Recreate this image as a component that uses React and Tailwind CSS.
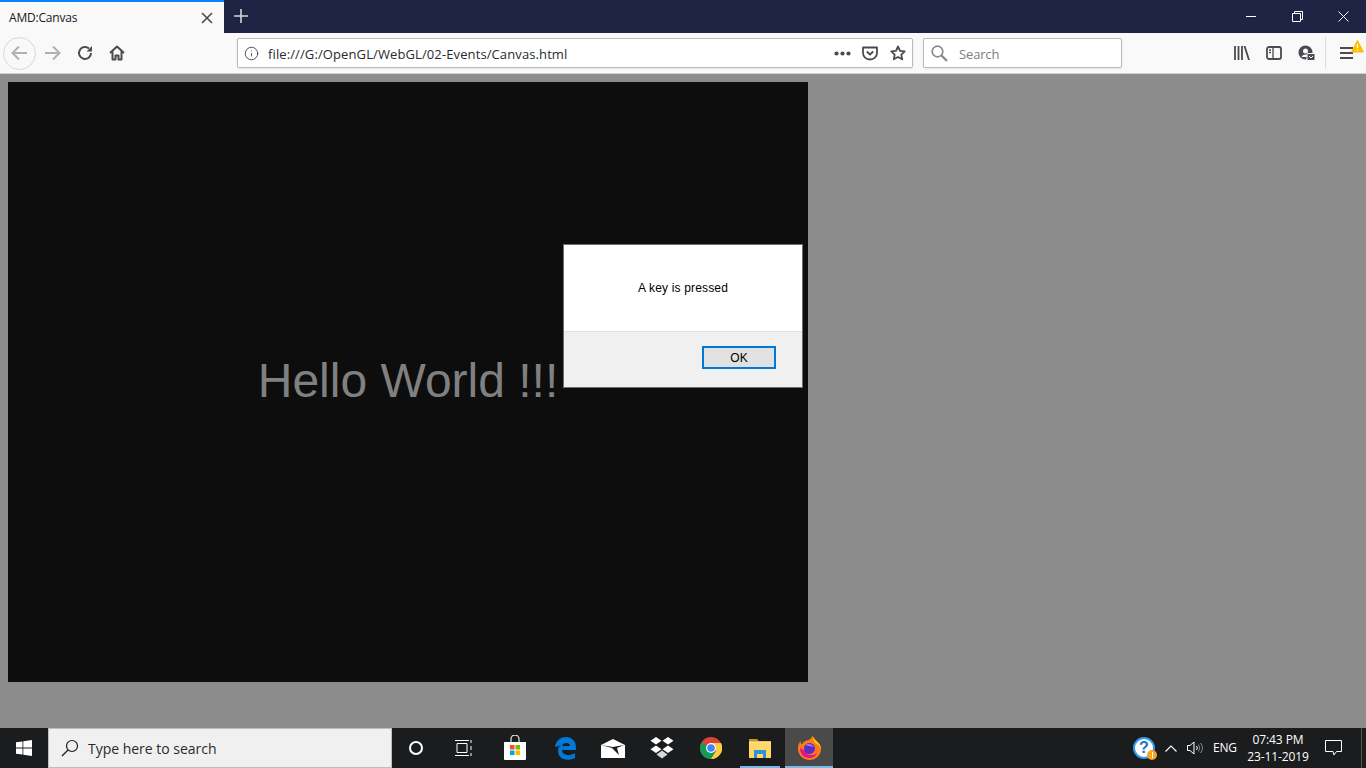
import React from 'react';
import { Info } from 'lucide-react';

const ui = "font-['Open_Sans',sans-serif]";

const TitleBar = () => (
  <div className="flex h-[33px] items-stretch bg-[#1f2445]">
    <div className="flex w-[224px] items-center justify-between border-t-2 border-[#0a84ff] bg-[#f9f9fa] pl-[9px] pr-[11px]">
      <span className={`${ui} text-[12px] leading-none tracking-[-0.2px] text-[#18181a]`}>AMD:Canvas</span>
      <svg width="12" height="12" viewBox="0 0 12 12" stroke="#4a4a4f" strokeWidth="1.6" fill="none">
        <path d="M1 1l10 10M11 1L1 11" />
      </svg>
    </div>
    <div className="flex w-[34px] items-center justify-center pb-[1px]">
      <svg width="14" height="14" viewBox="0 0 14 14" stroke="#d4d5dc" strokeWidth="1.6" fill="none">
        <path d="M7 0v14M0 7h14" />
      </svg>
    </div>
    <div className="flex-1" />
    <div className="flex">
      <div className="flex w-[46px] items-center justify-center">
        <div className="h-px w-[10px] bg-white" />
      </div>
      <div className="flex w-[46px] items-center justify-center">
        <svg width="11" height="11" viewBox="0 0 11 11" stroke="#fff" fill="none">
          <path d="M.5 2.500h8v8h-8zM2.500 2.500v-2h8v8h-2" />
        </svg>
      </div>
      <div className="flex w-[46px] items-center justify-center">
        <svg width="11" height="11" viewBox="0 0 11 11" stroke="#fff" fill="none">
          <path d="M.5.5l10 10M10.500.5l-10 10" />
        </svg>
      </div>
    </div>
  </div>
);

const ToolCell = ({ className = 'w-[32px]', children }) => (
  <div className={`flex items-center justify-center ${className}`}>{children}</div>
);

const Toolbar = () => (
  <div className="flex h-[41px] items-center border-b border-[#cfcfd1] bg-[#f9f9fa] pl-[3px]">
    <div className="flex h-[33px] w-[33px] items-center justify-center rounded-full border border-[#d7d7db]">
      <svg width="17" height="16" viewBox="0 0 17 16" stroke="#b1b1b3" strokeWidth="2" fill="none">
        <path d="M16 8H2M8 1.500L1.500 8 8 14.500" />
      </svg>
    </div>
    <ToolCell>
      <svg width="17" height="16" viewBox="0 0 17 16" stroke="#b1b1b3" strokeWidth="2" fill="none">
        <path d="M1 8h14M9 1.500L15.500 8 9 14.500" />
      </svg>
    </ToolCell>
    <ToolCell className="ml-[1px] w-[32px]">
      <svg width="16" height="16" viewBox="0 0 16 16" stroke="#4a4a4f" strokeWidth="2" fill="none">
        <path d="M14 8a6 6 0 1 1-2-4.500" />
        <path d="M15 1v5.500H9.500z" fill="#4a4a4f" stroke="none" />
      </svg>
    </ToolCell>
    <ToolCell>
      <svg width="16" height="16" viewBox="0 0 16 16" stroke="#4a4a4f" strokeWidth="2" fill="none" strokeLinejoin="round">
        <path d="M1 8l7-6.500L15 8M3.500 6.500V14.500h3V10.500h3v4h3V6.500" />
      </svg>
    </ToolCell>

    <div className="ml-[104px] flex h-[30px] w-[676px] items-center rounded-[2px] border border-[#b9b9bb] bg-white pl-[6px] pr-[6px] shadow-[0_1px_2px_rgba(0,0,0,0.08)]">
      <Info size={15} strokeWidth={1.6} className="text-[#55555a]" />
      <span className={`${ui} ml-[9px] flex-1 pt-[2px] text-[13px] leading-none tracking-[0.11px] text-[#2a2a2e]`}>file:///G:/OpenGL/WebGL/02-Events/Canvas.html</span>
      <div className="flex items-center gap-[2px]">
        <span className="h-[3px] w-[3px] rounded-full bg-[#4a4a4f] shadow-[0_0_0_0.6px_#4a4a4f]" />
        <span className="mx-[1px] h-[3px] w-[3px] rounded-full bg-[#4a4a4f] shadow-[0_0_0_0.6px_#4a4a4f]" />
        <span className="h-[3px] w-[3px] rounded-full bg-[#4a4a4f] shadow-[0_0_0_0.6px_#4a4a4f]" />
      </div>
      <svg className="ml-[12px]" width="16" height="15" viewBox="0 0 16 15" stroke="#4a4a4f" strokeWidth="1.800" fill="none" strokeLinejoin="round">
        <path d="M1 1.500h14V7a7 6.500 0 0 1-14 0zM4.800 5.500L8 8.500l3.200-3" />
      </svg>
      <svg className="ml-[12px]" width="16" height="16" viewBox="0 0 16 16" stroke="#4a4a4f" strokeWidth="1.800" fill="none" strokeLinejoin="round">
        <path d="M8 1.500l2 4.300 4.700.6-3.400 3.200.9 4.700L8 12l-4.200 2.300.9-4.700L1.300 6.400 6 5.800z" />
      </svg>
    </div>

    <div className="ml-[10px] flex h-[30px] w-[199px] items-center rounded-[2px] border border-[#b9b9bb] bg-white pl-[7px] shadow-[0_1px_2px_rgba(0,0,0,0.08)]">
      <svg width="17" height="17" viewBox="0 0 17 17" stroke="#8a8a8e" fill="none">
        <circle cx="6.500" cy="6.500" r="5.300" strokeWidth="1.700" />
        <path d="M10.500 10.500l5.500 5.500" strokeWidth="2.400" />
      </svg>
      <span className={`${ui} ml-[11px] pt-[2px] text-[13px] leading-none tracking-[-0.15px] text-[#7d7d85]`}>Search</span>
    </div>

    <div className="ml-[104px] flex items-center">
      <ToolCell>
        <svg width="16" height="14" viewBox="0 0 16 14" stroke="#4a4a4f" strokeWidth="1.800" fill="none">
          <path d="M1 0v14M4.500 0v14M8 0v14M10.500 0l4.500 14" />
        </svg>
      </ToolCell>
      <ToolCell>
        <svg width="16" height="14" viewBox="0 0 16 14" stroke="#4a4a4f" strokeWidth="1.800" fill="none">
          <rect x="1" y="1" width="14" height="12" rx="2" />
          <path d="M7 1v12M3 4h2M3 6.500h2" strokeWidth="1.300" />
        </svg>
      </ToolCell>
      <ToolCell>
        <svg width="17" height="16" viewBox="0 0 17 16">
          <circle cx="7.500" cy="7.500" r="7" fill="#4a4a4f" />
          <circle cx="7.500" cy="6" r="2.500" fill="#f9f9fa" />
          <path d="M3.500 12a4.500 4.500 0 0 1 8 0z" fill="#f9f9fa" />
          <rect x="9" y="8.500" width="8" height="7" rx="1" fill="#4a4a4f" stroke="#f9f9fa" />
          <path d="M11 11l2 2 2-2" stroke="#f9f9fa" fill="none" />
        </svg>
      </ToolCell>
    </div>
    <div className="ml-[3px] h-[32px] w-px bg-[#dcdcde]" />
    <div className="relative flex w-[40px] items-center justify-center">
      <svg width="13" height="12" viewBox="0 0 13 12" stroke="#4a4a4f" strokeWidth="1.800" fill="none">
        <path d="M0 1h13M0 6h13M0 11h13" />
      </svg>
      <svg className="absolute right-[2px] top-[-7px]" width="13" height="13" viewBox="0 0 13 13">
        <path d="M6.500.5l6 11.500H.5z" fill="#ffbf00" stroke="#ffbf00" strokeLinejoin="round" />
        <path d="M6.500 4v4M6.500 9.500v1.200" stroke="#fff" strokeWidth="1.300" />
      </svg>
    </div>
  </div>
);

const AlertBox = () => (
  <div className="absolute left-[563px] top-[244px] flex h-[144px] w-[240px] flex-col border border-[#6e6e6e] bg-white">
    <div className="flex flex-1 items-center justify-center">
      <span className="font-['Liberation_Sans',sans-serif] text-[12px] tracking-[0.16px] text-black">A key is pressed</span>
    </div>
    <div className="flex h-[56px] items-center justify-end border-t border-[#dfdfdf] bg-[#f0f0f0] pb-[4px] pr-[26px]">
      <div className="flex h-[23px] w-[74px] items-center justify-center border-2 border-[#0078d7] bg-[#e1e1e1] font-['Liberation_Sans',sans-serif] text-[12px] text-black">
        OK
      </div>
    </div>
  </div>
);

const Page = () => (
  <div className="flex-1 bg-[#8c8c8c] p-[8px]">
    <div className="flex h-[600px] w-[800px] items-center justify-center bg-[#0d0d0d] pb-[2px]">
      <span className="font-['Liberation_Sans',sans-serif] text-[48px] leading-none text-[#808080]">Hello World !!!</span>
    </div>
  </div>
);

const StoreIcon = () => (
  <svg width="24" height="26" viewBox="0 0 24 26" fill="none">
    <path d="M8 7V4a4 4 0 0 1 8 0v3" stroke="#d8d8d8" strokeWidth="1.300" />
    <path d="M1 7h22v17a1 1 0 0 1-1 1H2a1 1 0 0 1-1-1z" fill="#fff" />
    <rect x="7" y="10" width="4.500" height="4.500" fill="#f25022" />
    <rect x="12.500" y="10" width="4.500" height="4.500" fill="#7fba00" />
    <rect x="7" y="15.500" width="4.500" height="4.500" fill="#00a4ef" />
    <rect x="12.500" y="15.500" width="4.500" height="4.500" fill="#ffb900" />
  </svg>
);

const EdgeIcon = () => (
  <svg width="22" height="24" viewBox="0 0 22 24">
    <path d="M1 11C2 4 7 1 12 1c6 0 10 4 10 11v2H8c0 5 7 7 13 3v5c-8 4-17 1-17-7 0-3 1-5 3-6-3 1-5 2-6 2z" fill="#0078d7" />
    <path d="M8 10h8c0-4-7-4-8 0z" fill="#1b1c1e" />
  </svg>
);

const MailIcon = () => (
  <svg width="24" height="19" viewBox="0 0 24 19">
    <path d="M0 6L12 0l12 6v13H0z" fill="#fff" />
    <path d="M0 6l11 3 7 7-2-7 7-3-11 2z" fill="#1b1c1e" />
  </svg>
);

const DropboxIcon = () => (
  <svg width="24" height="22" viewBox="0 0 24 22" fill="#fff">
    <path d="M6 0l5.500 3.800L6 7.600.5 3.800zM18 0l5.500 3.800L18 7.600l-5.500-3.800zM6 8.400l5.500 3.800L6 16 .5 12.200zM18 8.400l5.500 3.800L18 16l-5.500-3.800z" />
    <path d="M12 13.500l5.500 4L12 21.500l-5.500-4z" fill="#d9d9d9" />
  </svg>
);

const ChromeIcon = () => (
  <svg width="22" height="22" viewBox="0 0 22 22">
    <circle cx="11" cy="11" r="11" fill="#db4437" />
    <path d="M11 11L1.500 5.500A11 11 0 0 0 11 22l5-6z" fill="#0f9d58" />
    <path d="M11 6h10a11 11 0 0 1-10 16l5-8z" fill="#ffcd40" />
    <circle cx="11" cy="11" r="5" fill="#fff" />
    <circle cx="11" cy="11" r="3.800" fill="#4285f4" />
  </svg>
);

const ExplorerIcon = () => (
  <svg width="22" height="20" viewBox="0 0 22 20">
    <path d="M0 1h8l2 2h12v3H0z" fill="#c9952f" />
    <path d="M0 5h22v15H0z" fill="#ffd766" />
    <path d="M5 20v-8h12v8h-3v-4H8v4z" fill="#2f8fd8" />
    <path d="M0 3.500h22v1.500H0z" fill="#fbe28f" />
  </svg>
);

const FirefoxIcon = () => (
  <svg width="23" height="24" viewBox="0 0 23 24">
    <path d="M11.500 24C5 24 0 19 0 12.500 0 9.500 1 7 2.500 5c0 2 .5 3 1.500 3.500C5 6 7 5 9 4.500 11 4 13 3 14.500 0c1 2 2 3 4 5 3 2.500 4.500 5 4.500 8 0 6-5 11-11.500 11z" fill="#ff7a18" />
    <path d="M14.500 0c1 2 2 3 4 5 3 2.500 4.500 5 4.500 8-1-3-3-5-6-6-1-2-2-4-2.500-7z" fill="#ffcb00" />
    <path d="M2 12c0 6 4 10 9 10 4 0 7-2 8-5-3 3-10 3-12-2z" fill="#e31587" />
    <circle cx="11.500" cy="12.500" r="5.500" fill="#5d2fc1" />
    <path d="M7 9c3-2 7-1 9 2-3-1-6-1-9-2z" fill="#a978ff" />
  </svg>
);

const TaskIcon = ({ children, className = 'w-[49px]' }) => (
  <div className={`flex h-full items-center justify-center ${className}`}>{children}</div>
);

const Taskbar = () => (
  <div className="flex h-[40px] items-stretch bg-[#1b1c1e]">
    <div className="flex w-[48px] items-center justify-center">
      <svg width="16" height="16" viewBox="0 0 16 16" fill="#fff">
        <path d="M0 2.300l6.500-.9v6.200H0zM7.300 1.300L16 0v7.600H7.300zM0 8.400h6.500v6.200L0 13.700zM7.300 8.400H16V16l-8.700-1.300z" />
      </svg>
    </div>
    <div className="flex w-[344px] items-center border border-[#bdbdbd] bg-[#f0f0f0] pl-[12px]">
      <svg width="18" height="18" viewBox="0 0 18 18" stroke="#1a1a1a" strokeWidth="1.200" fill="none">
        <circle cx="11" cy="7" r="5.500" />
        <path d="M7 11l-6 6" />
      </svg>
      <span className={`${ui} ml-[9px] pt-[2px] text-[14px] leading-none tracking-[-0.02px] text-[#2b2b2b]`}>Type here to search</span>
    </div>
    <TaskIcon className="w-[48px]">
      <div className="h-[14px] w-[14px] rounded-full border-2 border-white" />
    </TaskIcon>
    <TaskIcon className="w-[47px]">
      <svg width="17" height="16" viewBox="0 0 17 16" stroke="#fff" fill="none">
        <path d="M2 3.500h10v9H2zM0 .5h14M0 15.500h14M16 0v3M16 6v4M16 13v3" />
      </svg>
    </TaskIcon>
    <TaskIcon className="ml-[2px] w-[52px]"><StoreIcon /></TaskIcon>
    <TaskIcon className="w-[47px]"><EdgeIcon /></TaskIcon>
    <TaskIcon><MailIcon /></TaskIcon>
    <TaskIcon><DropboxIcon /></TaskIcon>
    <TaskIcon><ChromeIcon /></TaskIcon>
    <TaskIcon className="ml-[5px] mr-[5px] w-[40px] border-b-2 border-[#76b9ed] pt-[2px]"><ExplorerIcon /></TaskIcon>
    <TaskIcon className="w-[48px] border-b-2 border-[#76b9ed] bg-[#4a4a4a] pt-[2px]"><FirefoxIcon /></TaskIcon>

    <div className="flex-1" />

    <div className="flex items-center text-white">
      <div className="relative mr-[10px] flex h-[22px] w-[22px] items-center justify-center rounded-full border-2 border-[#2f9be8] bg-white">
        <span className="font-['Liberation_Sans',sans-serif] text-[16px] font-bold leading-none text-[#1b75bc]">?</span>
        <span className="absolute bottom-[-3px] right-[-4px] flex h-[10px] w-[10px] items-center justify-center rounded-full bg-[#f5a623]">
          <span className="h-[6px] w-px bg-white" />
        </span>
      </div>
      <svg width="12" height="7" viewBox="0 0 12 7" stroke="#fff" strokeWidth="1.100" fill="none">
        <path d="M.5 6.500L6 1l5.500 5.500" />
      </svg>
      <svg className="ml-[10px]" width="16" height="14" viewBox="0 0 16 14" stroke="#fff" fill="none">
        <path d="M.5 4.500h2.500L7 1v12L3 9.500H.5z" />
        <path d="M9.500 5a3 3 0 0 1 0 4" />
        <path d="M11.500 3.500a6 6 0 0 1 0 7M13.500 2a8 8 0 0 1 0 10" stroke="#8a8a8a" />
      </svg>
      <span className={`${ui} ml-[10px] w-[28px] text-[12px] leading-none tracking-[-0.2px]`}>ENG</span>
      <div className={`${ui} ml-[6px] flex w-[62px] flex-col items-center gap-[5px] text-[12px] leading-none tracking-[-0.1px]`}>
        <span>07:43 PM</span>
        <span>23-11-2019</span>
      </div>
      <div className="ml-[16px] flex w-[17px] items-center justify-center">
        <svg width="17" height="16" viewBox="0 0 17 16" stroke="#fff" fill="none">
          <path d="M.5.500h16v11h-5L9 15l-1-3.500H.5z" />
        </svg>
      </div>
      <div className="ml-[19px] h-full w-[5px] border-l border-[#555]" />
    </div>
  </div>
);

export default function App() {
  return (
    <div className="relative flex h-[768px] w-[1366px] flex-col overflow-hidden">
      <TitleBar />
      <Toolbar />
      <Page />
      <AlertBox />
      <Taskbar />
    </div>
  );
}
